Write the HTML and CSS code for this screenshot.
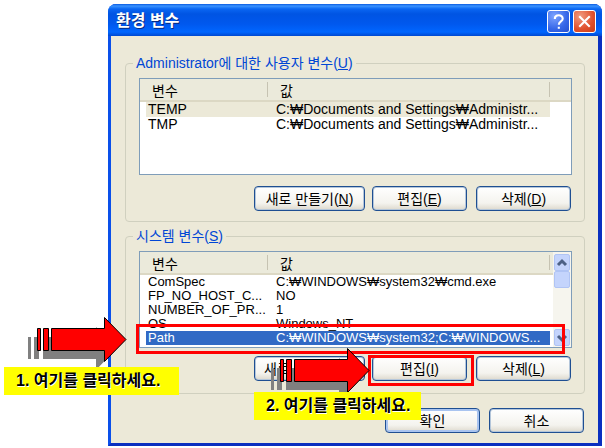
FILE: index.html
```html
<!DOCTYPE html>
<html lang="ko">
<head>
<meta charset="utf-8">
<title>환경 변수</title>
<link rel="stylesheet" href="styles.css">
</head>
<body>
<main class="stage">
  <section class="window">
    <header class="titlebar">
      <h1>환경 변수</h1>
      <button class="caption help" type="button" aria-label="도움말">
        <svg viewBox="0 0 20 20"><path d="M6.500 7.500C6.500 3 14 3 14 7.300C14 10 10.300 9.800 10.300 13M10.300 15v2"/></svg>
      </button>
      <button class="caption close" type="button" aria-label="닫기">
        <svg viewBox="0 0 20 20"><path d="M5 5l10 10M15 5L5 15"/></svg>
      </button>
    </header>
    <div class="body">
      <fieldset class="group">
        <legend>Administrator에 대한 사용자 변수(<u>U</u>)</legend>
        <div class="list">
          <table>
            <thead><tr><th class="name">변수</th><th>값</th><th class="rest"></th></tr></thead>
            <tbody>
              <tr class="current"><td>TEMP</td><td>C:₩Documents and Settings₩Administr...</td></tr>
              <tr><td>TMP</td><td>C:₩Documents and Settings₩Administr...</td></tr>
            </tbody>
          </table>
        </div>
        <div class="actions">
          <button class="btn wide" type="button">새로 만들기(<u>N</u>)</button>
          <button class="btn" type="button">편집(<u>E</u>)</button>
          <button class="btn last" type="button">삭제(<u>D</u>)</button>
        </div>
      </fieldset>
      <fieldset class="group system">
        <legend>시스템 변수(<u>S</u>)</legend>
        <div class="list">
          <table>
            <thead><tr><th class="name">변수</th><th>값</th><th class="rest"></th></tr></thead>
            <tbody>
              <tr><td>ComSpec</td><td>C:₩WINDOWS₩system32₩cmd.exe</td></tr>
              <tr><td>FP_NO_HOST_C...</td><td>NO</td></tr>
              <tr><td>NUMBER_OF_PR...</td><td>1</td></tr>
              <tr><td>OS</td><td>Windows_NT</td></tr>
              <tr class="selected"><td>Path</td><td>C:₩WINDOWS₩system32;C:₩WINDOWS...</td></tr>
            </tbody>
          </table>
          <div class="scroll">
            <button type="button" aria-label="위로"><svg viewBox="0 0 14 14"><path d="M3 9l4-4 4 4"/></svg></button>
            <span class="thumb"></span>
            <button class="down" type="button" aria-label="아래로"><svg viewBox="0 0 14 14"><path d="M3 5l4 4 4-4"/></svg></button>
          </div>
        </div>
        <div class="actions">
          <button class="btn wide" type="button">새로 만들기(<u>W</u>)</button>
          <button class="btn" type="button">편집(<u>I</u>)</button>
          <button class="btn last" type="button">삭제(<u>L</u>)</button>
        </div>
      </fieldset>
      <footer class="footer">
        <button class="btn default" type="button">확인</button>
        <button class="btn last" type="button">취소</button>
      </footer>
    </div>
  </section>

  <div class="frame frame-row"></div>
  <div class="frame frame-button"></div>
  <svg class="arrow arrow-one" viewBox="0 0 100 56">
    <path class="shade" d="M0 20h3v22H0zM6 20h5v22H6zM15 20h53v-10l21 21-21 22V42H15z"/>
    <path class="shape" d="M9.500 11.500h3v22h-3zM15.500 11.500h5v22h-5zM23.500 11.500h53v-11l21.500 22-21.500 22v-11h-53z"/>
  </svg>
  <svg class="arrow arrow-two" viewBox="0 0 100 56">
    <path class="shade" d="M0 20h3v22H0zM6 20h5v22H6zM15 20h53v-10l21 21-21 22V42H15z"/>
    <path class="shape" d="M9.500 11.500h3v22h-3zM15.500 11.500h5v22h-5zM23.500 11.500h53v-11l21.500 22-21.500 22v-11h-53z"/>
  </svg>
  <p class="note note-one">1. 여기를 클릭하세요.</p>
  <p class="note note-two">2. 여기를 클릭하세요.</p>
</main>
</body>
</html>
```

FILE: styles.css
```css
* { box-sizing: border-box; }
body {
  margin: 0;
  background: #fff;
  color: #000;
  font: 14px/14px "Liberation Sans", "Noto Sans CJK KR", sans-serif;
}
button { font: inherit; color: inherit; padding: 0; }
.stage { position: relative; padding: 4px 3px 2px 108px; }
.window {
  border: solid #0a45e0;
  border-width: 0 4px 3px 3px;
  border-color: #0a45e0 #0a2fc0 #0a2fc0 #0a50ea;
  border-radius: 8px 8px 0 0;
  background: #0a50e8;
}
.titlebar {
  display: flex;
  align-items: center;
  gap: 3px;
  height: 32px;
  margin: 0 -4px 0 -3px;
  padding: 2px 6px 0 8px;
  border-radius: 8px 8px 0 0;
  background: linear-gradient(#0a5ae0 0, #3a93ff 2px, #0a66f2 5px, #0054e3 10px, #0058ee 20px, #0066ff 28px, #0048d0 32px);
}
.titlebar h1 {
  flex: 1;
  margin: 0;
  color: #fff;
  font-size: 16px;
  line-height: 20px;
  text-shadow: 1px 1px #0a2a80;
}
.caption {
  width: 23px;
  height: 23px;
  border: 1px solid #fff;
  border-radius: 3px;
  background: radial-gradient(circle at 30% 25%, #7ea4ff, #3566e8 60%, #2450d0);
}
.caption.close { background: radial-gradient(circle at 30% 25%, #f09a80, #e0502c 60%, #c83c18); }
.caption svg { display: block; width: 21px; height: 21px; fill: none; stroke: #fff; stroke-width: 2; }
.body { padding: 19px 13px 10px 14px; background: #ece9d8; }
.group {
  min-width: 0;
  margin: 0 0 6px;
  padding: 7px 12px 10px 13px;
  border: 1px solid #d0d0bf;
  border-radius: 4px;
}
legend { margin-left: -6px; padding: 0 3px; color: #0046d5; line-height: 16px; }
.list { display: flex; height: 97px; border: 1px solid #7f9db9; background: #fff; overflow: hidden; }
table { flex: 1; min-width: 0; align-self: flex-start; table-layout: fixed; border-collapse: separate; border-spacing: 0; width: 100%; }
th {
  height: 23px;
  padding: 2px 0 0 12px;
  border-bottom: 2px solid #dcd8c4;
  background: linear-gradient(#c6c3b2, #c6c3b2) right center / 1px 15px no-repeat #ebeadb;
  font-weight: normal;
  text-align: left;
}
th.name { width: 128px; }
th.rest { width: 21px; background-image: none; }
td { height: 15px; padding: 0 0 0 8px; line-height: 15px; white-space: nowrap; }
td:first-child { padding-left: 2px; border-left: 6px solid transparent; background-clip: padding-box; }
.current td { background-color: #ece9d8; }
.selected td { color: #fff; background-color: #316ac5; }
.system { padding-bottom: 12px; }
.system td { height: 14px; font-size: 13px; line-height: 14px; }
.scroll {
  display: flex;
  flex-direction: column;
  width: 18px;
  margin-left: -18px;
  padding: 2px 1px 1px;
  background: #f6f5ee;
}
.scroll button, .thumb { width: 16px; height: 17px; border: 1px solid #b0c4f4; border-radius: 2px; background: #c4d4fc; }
.scroll .down { margin-top: auto; }
.scroll svg { display: block; width: 14px; height: 14px; fill: none; stroke: #4d6185; stroke-width: 3; }
.actions { display: flex; justify-content: flex-end; gap: 7px; margin-top: 11px; padding-right: 1px; }
.system .actions { margin-top: 8px; }
.btn {
  width: 95px;
  height: 25px;
  border: 1px solid #1f4f92;
  border-radius: 4px;
  background: linear-gradient(#fff, #f4f3ee 70%, #dcd8cc);
  box-shadow: inset 0 0 0 1px #b4c6da;
}
.btn.wide { width: 111px; }
.btn.last { margin-left: 2px; }
.btn.default { box-shadow: inset 0 0 0 2px #a9c4f0; }
.footer { display: flex; justify-content: flex-end; gap: 7px; padding: 8px 1px 0 0; }
.frame { position: absolute; border: 3px solid #f00; }
.frame-row { left: 136px; right: 40px; top: 324px; height: 30px; }
.frame-button { right: 131px; width: 106px; top: 355px; height: 31px; }
.arrow { position: absolute; width: 100px; height: 56px; }
.arrow-one { left: 28px; top: 317px; }
.arrow-two { left: 271px; top: 348px; }
.shade { fill: #808080; }
.shape { fill: #f00; stroke: #000; }
.note {
  position: absolute;
  margin: 0;
  padding: 0 12px;
  background: #ff0;
  font-size: 16px;
  font-weight: bold;
  line-height: 28px;
  text-shadow: 1px 1px #fff;
  white-space: nowrap;
}
.note-one { left: 4px; top: 367px; width: 175px; }
.note-two { left: 254px; top: 392px; width: 167px; }
```
